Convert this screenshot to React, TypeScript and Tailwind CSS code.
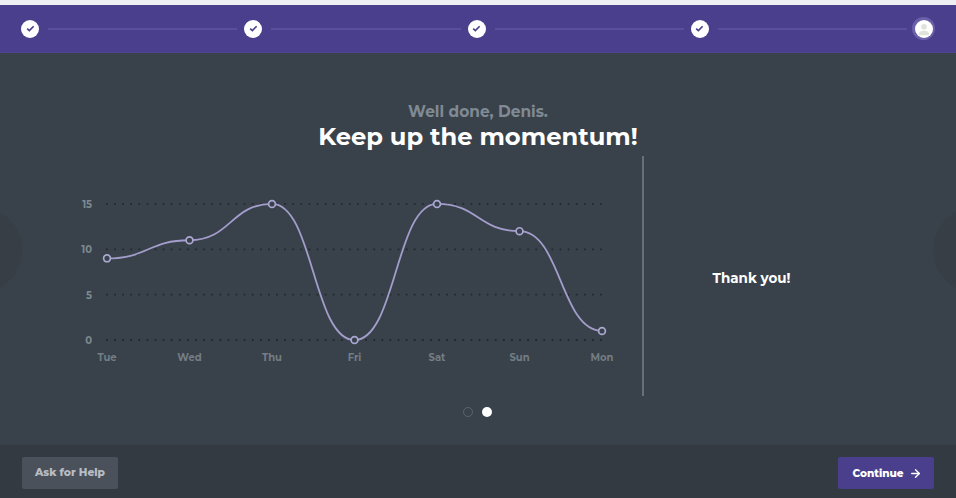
import { ArrowRight } from 'lucide-react';

const font = "font-['Montserrat','Inter','Liberation_Sans',sans-serif]";
const chartFont = 'Montserrat, Inter, sans-serif';

const points = [
  { day: 'Tue', value: 9 },
  { day: 'Wed', value: 11 },
  { day: 'Thu', value: 15 },
  { day: 'Fri', value: 0 },
  { day: 'Sat', value: 15 },
  { day: 'Sun', value: 12 },
  { day: 'Mon', value: 1 },
];

const xAt = (i: number) => 107 + i * 82.5;
const yAt = (v: number) => 340 - v * 9.07;

function buildLine() {
  let d = `M${xAt(0)} ${yAt(points[0].value)}`;
  for (let i = 1; i < points.length; i++) {
    const x0 = xAt(i - 1);
    const x1 = xAt(i);
    const mid = (x0 + x1) / 2;
    d += ` C${mid} ${yAt(points[i - 1].value)} ${mid} ${yAt(points[i].value)} ${x1} ${yAt(points[i].value)}`;
  }
  return d;
}

function Chart() {
  return (
    <svg viewBox="70 156 572 240" className="w-[572px] h-[240px] shrink-0">
      {[0, 5, 10, 15].map((v) => (
        <g key={v}>
          <line
            x1="106"
            x2="602"
            y1={yAt(v)}
            y2={yAt(v)}
            stroke="#24282d"
            strokeWidth="1.8"
            strokeDasharray="1.8 6.3"
          />
          <text
            x="92"
            y={yAt(v) + 4}
            textAnchor="end"
            fontSize="10"
            fontWeight="700"
            fill="#7f8990"
            fontFamily={chartFont}
          >
            {v}
          </text>
        </g>
      ))}
      <path d={buildLine()} fill="none" stroke="#a39dcb" strokeWidth="1.8" />
      {points.map((p, i) => (
        <g key={p.day}>
          <circle cx={xAt(i)} cy={yAt(p.value)} r="3.4" fill="#39424a" stroke="#aca7d2" strokeWidth="1.7" />
          <text
            x={xAt(i)}
            y="360.5"
            textAnchor="middle"
            fontSize="10"
            fontWeight="700"
            fill="#737d84"
            fontFamily={chartFont}
          >
            {p.day}
          </text>
        </g>
      ))}
    </svg>
  );
}

function StepCheck() {
  return (
    <div className="w-[18px] h-[18px] rounded-full bg-white flex items-center justify-center shrink-0">
      <svg viewBox="0 0 10 8" className="w-[9px] h-[7px]">
        <path d="M1.2 4.2 L3.7 6.4 L8.6 1.4" fill="none" stroke="#4a3f8c" strokeWidth="1.9" />
      </svg>
    </div>
  );
}

function StepLine() {
  return <div className="h-[2px] flex-1 ml-[9px] mr-[7px] bg-[#5a4e9d]" />;
}

export default function App() {
  return (
    <div className={`${font} w-[956px] h-[498px] flex flex-col overflow-hidden bg-[#39424a]`}>
      <div className="h-[5px] bg-[#eeeff2]" />

      <div className="h-[48px] bg-[#4a3f8c] border-b border-[#4f4494] flex items-center px-[21px]">
        <StepCheck />
        <StepLine />
        <StepCheck />
        <StepLine />
        <StepCheck />
        <StepLine />
        <StepCheck />
        <div className="h-[2px] flex-1 ml-[9px] mr-[5px] bg-[#5a4e9d]" />
        <div className="w-[23px] h-[23px] rounded-full bg-[#6a5fa9] flex items-center justify-center shrink-0">
          <div className="w-[18px] h-[18px] rounded-full bg-white flex items-center justify-center overflow-hidden">
            <svg viewBox="0 0 16 16" className="w-[14px] h-[14px]">
              <circle cx="8" cy="5.4" r="3.2" fill="#e0e2dc" />
              <path d="M2 15 C2 11 5 10.4 6.6 10 L9.4 10 C11 10.4 14 11 14 15 Z" fill="#e0e2dc" />
            </svg>
          </div>
        </div>
      </div>

      <div className="relative h-[392px] flex flex-col">
        <div className="absolute left-[-64px] top-[154px] w-[86px] h-[86px] rounded-full bg-[#373e45]" />
        <div className="absolute left-[933px] top-[154px] w-[86px] h-[86px] rounded-full bg-[#373e45]" />

        <div className="pt-[50px] h-[103px] text-center">
          <p className="text-[15.4px] leading-[18px] font-bold text-[#808a94]">Well done, Denis.</p>
          <h1 className="text-[24.2px] leading-[32px] font-bold text-white">Keep up the momentum!</h1>
        </div>

        <div className="flex pl-[70px] items-stretch">
          <Chart />
          <div className="w-[2px] h-[240px] bg-[#677078] shrink-0" />
          <div className="flex-1 pr-[97px] pt-[5px] flex items-center justify-center">
            <p className="text-[13.5px] font-bold text-white">Thank you!</p>
          </div>
        </div>

        <div className="flex justify-center items-center gap-[9px] mt-[11px] pr-[2px]">
          <div className="w-[10px] h-[10px] rounded-full border border-[#5b636b]" />
          <div className="w-[10px] h-[10px] rounded-full bg-white" />
        </div>
      </div>

      <div className="h-[53px] bg-[#333a41] flex items-start justify-between px-[22px] pt-[12px]">
        <button className="w-[96px] h-[32px] rounded-[2px] bg-[#4a515b] text-[10.7px] font-extrabold text-[#b8bcc3]">
          Ask for Help
        </button>
        <button className="w-[96px] h-[32px] rounded-[2px] bg-[#4a3f8c] pl-[2px] pt-[1px] text-[10.5px] font-extrabold text-white flex items-center justify-center gap-[5px]">
          Continue
          <ArrowRight size={13} strokeWidth={2.5} />
        </button>
      </div>
    </div>
  );
}
